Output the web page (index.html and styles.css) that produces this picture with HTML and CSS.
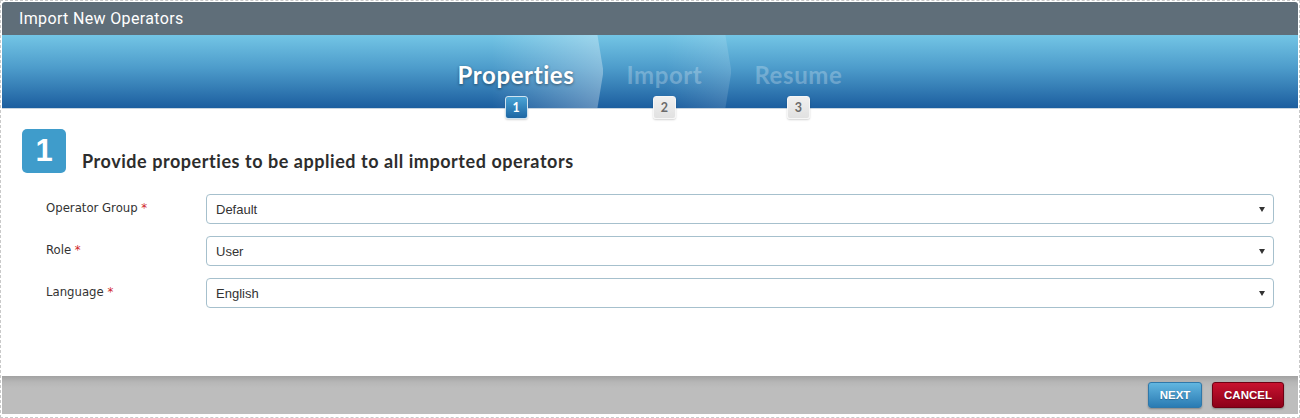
FILE: index.html
```html
<!DOCTYPE html>
<html lang="en">
<head>
<meta charset="utf-8">
<title>Import New Operators</title>
<link rel="stylesheet" href="styles.css">
</head>
<body>
<div class="frame">
  <div class="dialog">
    <div class="titlebar">Import New Operators</div>
    <div class="wizard">
      <div class="steps">
        <div class="step active"><span class="step-label">Properties</span><span class="step-num">1</span></div>
        <div class="step done-next"><span class="step-label">Import</span><span class="step-num">2</span></div>
        <div class="step last"><span class="step-label">Resume</span><span class="step-num">3</span></div>
      </div>
    </div>
    <div class="content">
      <div class="section-head">
        <div class="badge">1</div>
        <h2 class="section-title">Provide properties to be applied to all imported operators</h2>
      </div>
      <div class="form">
        <div class="row">
          <label class="label">Operator Group <span class="req">*</span></label>
          <div class="select"><span class="select-value">Default</span></div>
        </div>
        <div class="row">
          <label class="label">Role <span class="req">*</span></label>
          <div class="select"><span class="select-value">User</span></div>
        </div>
        <div class="row">
          <label class="label">Language <span class="req">*</span></label>
          <div class="select"><span class="select-value">English</span></div>
        </div>
      </div>
    </div>
    <div class="footer">
      <button class="btn btn-next">NEXT</button>
      <button class="btn btn-cancel">CANCEL</button>
    </div>
  </div>
</div>
</body>
</html>
```
FILE: styles.css
```css
* { box-sizing: border-box; }
html, body { margin: 0; padding: 0; background: #fff; }

.frame {
  width: 1300px;
  height: 418px;
  border: 1px dashed #c9c9c9;
  padding: 1px 1px 3px 1px;
  background: #fff;
}

.dialog {
  height: 100%;
  display: flex;
  flex-direction: column;
  background: #fff;
}

.titlebar {
  height: 33px;
  line-height: 33px;
  padding-left: 17px;
  background: #5f6e79;
  color: #fff;
  font-family: Roboto, "Liberation Sans", sans-serif;
  font-size: 16px;
  letter-spacing: 0.35px;
  border-radius: 3px 3px 0 0;
}

.wizard {
  height: 74px;
  background: linear-gradient(to bottom, #73c5e5 0%, #4d9ccb 45%, #1c5e9f 100%);
  border-bottom: 1px solid #c8d5e0;
  position: relative;
  z-index: 1;
}

.steps {
  display: flex;
  justify-content: center;
  height: 73px;
}

.step {
  position: relative;
  display: flex;
  flex-direction: column;
  align-items: center;
  padding: 0 26px;
  height: 73px;
}

.step::before {
  content: "";
  position: absolute;
  top: 0;
  bottom: 0;
  left: 0;
  right: -3px;
  clip-path: polygon(0 0, calc(100% - 6px) 0, 100% 50%, calc(100% - 6px) 100%, 0 100%);
  z-index: 0;
}

.step.active::before {
  background: linear-gradient(to right, rgba(255,255,255,0) 35%, rgba(255,255,255,0.32) 100%);
}
.step.done-next::before {
  background: linear-gradient(to right, rgba(255,255,255,0) 50%, rgba(255,255,255,0.14) 100%);
}
.step.last::before { display: none; }

.step-label {
  position: relative;
  z-index: 1;
  padding-top: 26px;
  line-height: 28px;
  font-family: Lato, "Open Sans", sans-serif;
  font-weight: 700;
  font-size: 24px;
  letter-spacing: 0.6px;
  color: rgba(255,255,255,0.26);
}

.step.active .step-label {
  color: #fff;
  text-shadow: 0 1px 3px rgba(0,0,0,0.45);
}

.step-num {
  position: relative;
  z-index: 1;
  margin-top: 7px;
  width: 23px;
  height: 23px;
  border-radius: 3px;
  font-family: Lato, "Liberation Sans", sans-serif;
  font-weight: 700;
  font-size: 12.5px;
  line-height: 21px;
  text-align: center;
  background: linear-gradient(#f0f0f0, #e1e1e1);
  border: 1px solid #f6f6f6;
  color: #6b6b6b;
  box-shadow: 0 1px 2px rgba(0,0,0,0.18);
}

.step.active .step-num {
  background: linear-gradient(#4aa4d6, #1d66a3);
  border: 1px solid #cfe3f0;
  color: #fff;
}

.content {
  flex: 1;
  padding: 20px 24px 0 20px;
}

.section-head {
  display: flex;
  align-items: flex-end;
}

.badge {
  width: 44px;
  height: 44px;
  border-radius: 5px;
  background: #3f9ccb;
  color: #fff;
  font-family: "Liberation Sans", Arial, sans-serif;
  font-weight: 700;
  font-size: 31px;
  line-height: 44px;
  text-align: center;
}

.section-title {
  margin: 0 0 2px 16px;
  font-family: Lato, "DejaVu Sans", sans-serif;
  font-weight: 700;
  font-size: 18px;
  line-height: 20px;
  color: #2d2d2d;
  letter-spacing: 0.55px;
}

.form {
  padding-left: 24px;
  margin-top: 21px;
  display: flex;
  flex-direction: column;
  gap: 12px;
}

.row {
  display: grid;
  grid-template-columns: 160px 1fr;
  align-items: center;
}

.label {
  font-family: "DejaVu Sans Condensed", "DejaVu Sans", sans-serif;
  font-size: 13px;
  color: #333;
  padding-bottom: 3px;
}

.req { color: #d0272a; }

.select {
  position: relative;
  height: 30px;
  border: 1px solid #a6c0cd;
  border-radius: 4px;
  background: #fff;
  padding-left: 9px;
  display: flex;
  align-items: center;
}

.select::after {
  content: "";
  position: absolute;
  right: 8px;
  top: 12px;
  width: 0;
  height: 0;
  border-left: 3px solid transparent;
  border-right: 3px solid transparent;
  border-top: 5px solid #333;
}

.select-value {
  font-family: "Liberation Sans", Arial, sans-serif;
  font-size: 13px;
  color: #333;
}

.footer {
  height: 38px;
  background: linear-gradient(to bottom, #a2a2a2 0px, #b6b6b6 6px, #bdbdbd 12px, #bdbdbd 100%);
  display: flex;
  justify-content: flex-end;
  align-items: flex-start;
  gap: 10px;
  padding: 6px 14px 0 0;
}

.btn {
  height: 26px;
  border-radius: 3px;
  font-family: "Liberation Sans", Arial, sans-serif;
  font-weight: 700;
  font-size: 11.5px;
  color: #fff;
  padding: 0;
  cursor: pointer;
  box-shadow: 0 1px 2px rgba(0,0,0,0.3);
}

.btn-next {
  width: 54px;
  background: linear-gradient(#62b6e0, #2a7bb3);
  border: 1px solid #2f78aa;
  text-shadow: 0 1px 1px rgba(0,0,0,0.25);
}

.btn-cancel {
  width: 72px;
  background: linear-gradient(#c8122f, #8c0019);
  border: 1px solid #6e0013;
  text-shadow: 0 1px 1px rgba(0,0,0,0.35);
}
```
